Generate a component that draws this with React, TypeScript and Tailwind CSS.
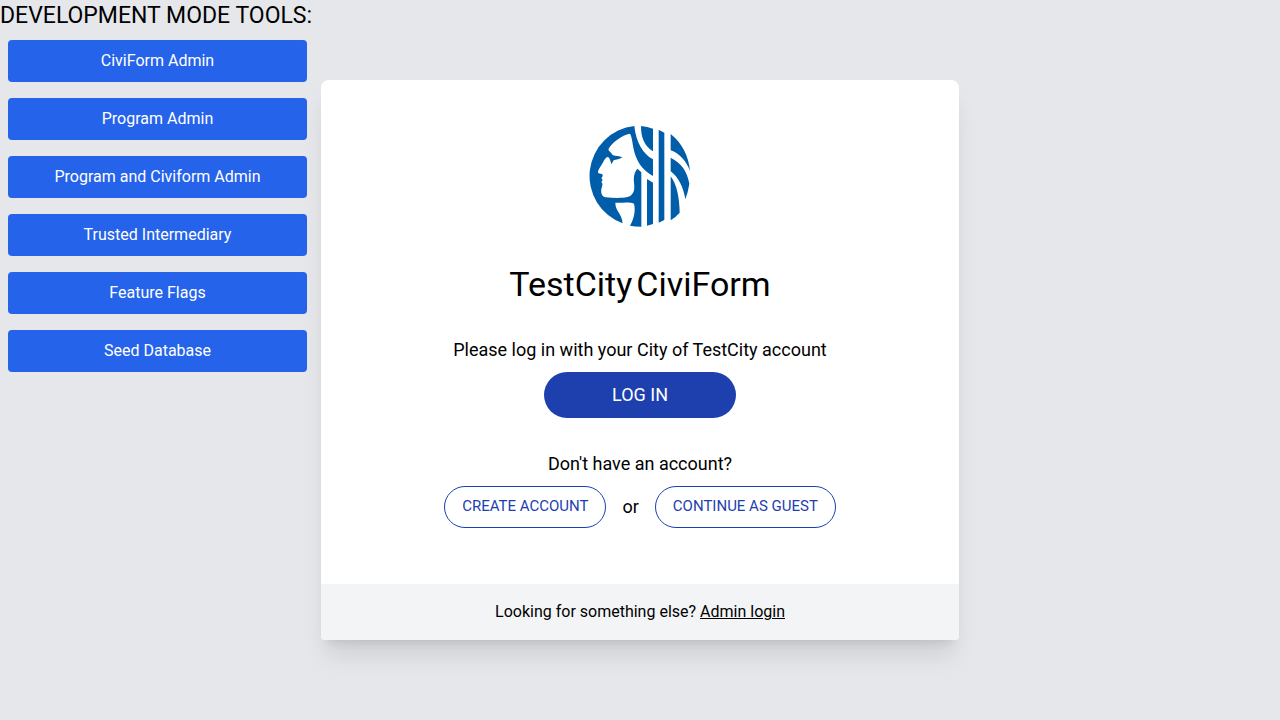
import React from "react";

const tools = [
  "CiviForm Admin",
  "Program Admin",
  "Program and Civiform Admin",
  "Trusted Intermediary",
  "Feature Flags",
  "Seed Database",
];

function Logo() {
  return (
    <svg viewBox="27 27 306 306" className="size-[102px]" role="img" aria-label="TestCity logo">
      <g fill="#005DAA">
        <path d="M163 30 C168 80 190 115 219 130 V180 C185 160 168 135 160 95 C157 78 155 60 150 53 C125 58 98 78 86 98 Q84 104 90 107 Q94 111 98 117 C106 121 118 119 127 124 C119 130 108 130 101 133 L94 145 C92 136 90 130 87 125 C80 118 74 130 68 141 C63 151 55 158 54 168 C53 173 62 172 67 175 C70 180 66 184 64 187 L68 192 L64 198 C69 203 67 207 66 212 C62 222 61 240 77 244 C100 246 125 247 142 243 C161 238 165 222 162 200 C160 182 163 168 172 158 L184 169 V332 Q165 332 150 329 C160 312 168 285 162 263 C145 256 122 262 106 260 C106 285 126 293 128 322 A151 151 0 0 1 163 30 Z" />
        <path d="M183 30 Q202 32 219 38 V106 C193 90 183 65 183 30 Z" />
        <path d="M201 189 L219 200 V324 L201 329 Z" />
        <path d="M236 41 L253 50 V312 L236 320 Z" />
        <path d="M272 54 C308 83 326 122 330 165 C319 135 298 112 272 103 Z" />
        <path d="M272 125 C305 141 322 167 328 203 Q324 230 316 250 C311 217 296 183 272 166 Z" />
        <path d="M272 181 C290 204 298 244 299 290 Q288 303 272 313 Z" />
      </g>
    </svg>
  );
}

export default function App() {
  return (
    <div className="grid min-h-screen grid-cols-[minmax(0,1fr)_minmax(0,638px)_minmax(0,1fr)] bg-gray-200 font-[Roboto,'Liberation_Sans',sans-serif] text-base text-black">
      <aside className="w-[315px]">
        <h2 className="text-[23px] leading-8 whitespace-nowrap">DEVELOPMENT MODE TOOLS:</h2>
        <div className="mx-2 mt-2 flex flex-col gap-4">
          {tools.map((tool) => (
            <button key={tool} type="button" className="rounded bg-[#2563eb] px-4 py-2 leading-[26px] text-white">
              {tool}
            </button>
          ))}
        </div>
      </aside>
      <main className="flex flex-col self-center overflow-hidden rounded-t-lg rounded-b-sm bg-white text-center shadow-xl">
        <div className="flex flex-col items-center px-8 pt-[45px] pb-14 text-lg">
          <Logo />
          <h1 className="mt-[33px] flex gap-1 text-[34px] leading-[48px]">
            <span>TestCity</span>
            <span>CiviForm</span>
          </h1>
          <p className="mt-7">Please log in with your City of TestCity account</p>
          <button type="button" className="mt-2 h-[46px] w-48 rounded-full bg-[#1e40af] text-white">
            LOG IN
          </button>
          <p className="mt-8">Don't have an account?</p>
          <div className="mt-2 flex items-center gap-4">
            <button type="button" className="h-[42px] rounded-full border border-[#1e40af] px-[17px] text-[15px] text-[#1e40af]">
              CREATE ACCOUNT
            </button>
            <span>or</span>
            <button type="button" className="h-[42px] rounded-full border border-[#1e40af] px-[17px] text-[15px] text-[#1e40af]">
              CONTINUE AS GUEST
            </button>
          </div>
        </div>
        <div className="bg-gray-100 py-4">
          Looking for something else?{" "}
          <a href="#admin" className="underline">
            Admin login
          </a>
        </div>
      </main>
    </div>
  );
}
